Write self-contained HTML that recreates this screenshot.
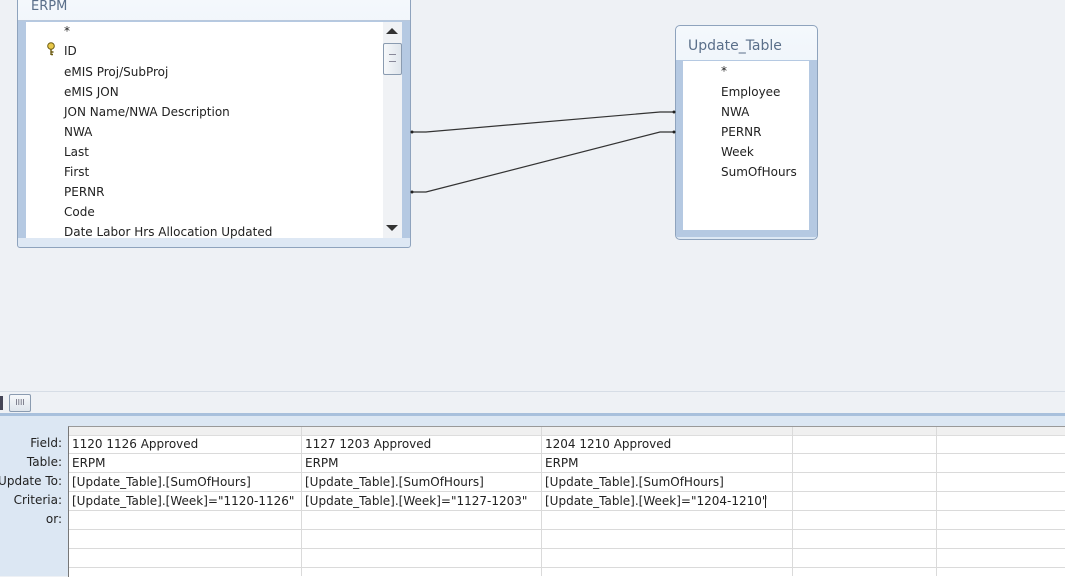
<!DOCTYPE html>
<html><head><style>
body{margin:0;width:1065px;height:576px;overflow:hidden;background:#eef1f5;font-family:"DejaVu Sans","Liberation Sans",sans-serif;font-size:12px;color:#222;position:relative}
.a{position:absolute}
.row{position:absolute;left:64px;white-space:nowrap}
.lab{position:absolute;right:1003px;text-align:right;white-space:nowrap}
.cell{position:absolute;white-space:nowrap}
</style></head><body>
<div class="a" style="left:17px;top:-4px;width:392px;height:250px;border:1px solid #8ea3bd;background:linear-gradient(#f4f8fc,#dde8f4);border-radius:3px"></div>
<div class="a" style="left:31px;top:-1px;color:#5a6f8a;font-size:13px">ERPM</div>
<div class="a" style="left:18px;top:20px;width:392px;height:1px;background:#b8c8dc"></div>
<div class="a" style="left:18px;top:21px;width:392px;height:217px;background:#b5c9e2"></div>
<div class="a" style="left:26px;top:22px;width:376px;height:216px;background:#fff"></div>
<div class="a" style="left:383px;top:22px;width:19px;height:216px;background:#f0f2f5"></div>
<div class="a" style="left:386px;top:28px;width:0;height:0;border-left:6px solid transparent;border-right:6px solid transparent;border-bottom:6px solid #333"></div>
<div class="a" style="left:383px;top:43px;width:17px;height:30px;border:1px solid #8a9bb0;border-radius:2px;background:linear-gradient(90deg,#f6f8fa,#dfe5ec)"></div>
<div class="a" style="left:389px;top:54px;width:7px;height:6px;border-top:1px solid #889;border-bottom:1px solid #889"></div>
<div class="a" style="left:386px;top:225px;width:0;height:0;border-left:6px solid transparent;border-right:6px solid transparent;border-top:6px solid #333"></div>
<svg class="a" style="left:46px;top:42px" width="10" height="14"><circle cx="5" cy="4" r="3.3" fill="#e8c84a" stroke="#6b5a10" stroke-width="1"/><path d="M5 7 V13 M5 10 H7.5 M5 12.5 H7" stroke="#6b5a10" stroke-width="1.4" fill="none"/></svg>
<div class="row" style="top:24px">*</div>
<div class="row" style="top:44px">ID</div>
<div class="row" style="top:65px">eMIS Proj/SubProj</div>
<div class="row" style="top:85px">eMIS JON</div>
<div class="row" style="top:105px">JON Name/NWA Description</div>
<div class="row" style="top:125px">NWA</div>
<div class="row" style="top:145px">Last</div>
<div class="row" style="top:165px">First</div>
<div class="row" style="top:185px">PERNR</div>
<div class="row" style="top:205px">Code</div>
<div class="row" style="top:225px">Date Labor Hrs Allocation Updated</div>
<div class="a" style="left:675px;top:25px;width:141px;height:213px;border:1px solid #8ea3bd;background:linear-gradient(#f4f8fc,#dde8f4);border-radius:5px"></div>
<div class="a" style="left:688px;top:38px;color:#5a6f8a;font-size:14px">Update_Table</div>
<div class="a" style="left:676px;top:60px;width:141px;height:177px;background:#b5c9e2"></div>
<div class="a" style="left:683px;top:61px;width:126px;height:169px;background:#fff"></div>
<div class="row" style="left:721px;top:64px">*</div>
<div class="row" style="left:721px;top:85px">Employee</div>
<div class="row" style="left:721px;top:105px">NWA</div>
<div class="row" style="left:721px;top:125px">PERNR</div>
<div class="row" style="left:721px;top:145px">Week</div>
<div class="row" style="left:721px;top:165px">SumOfHours</div>
<svg class="a" style="left:0;top:0" width="1065" height="576"><g stroke="#333" stroke-width="1.2" fill="none"><polyline points="411,132 426,132 660,112 675,112"/><polyline points="411,192 426,192 660,132 675,132"/></g><g fill="#222"><circle cx="412" cy="132" r="1.5"/><circle cx="412" cy="192" r="1.5"/><circle cx="674" cy="112" r="1.5"/><circle cx="674" cy="132" r="1.5"/></g></svg>
<div class="a" style="left:0;top:391px;width:1065px;height:1px;background:#d6dde6"></div>
<div class="a" style="left:0;top:396px;width:3px;height:14px;background:#445"></div>
<div class="a" style="left:9px;top:394px;width:20px;height:16px;border:1px solid #8a9bb0;border-radius:2px;background:linear-gradient(#f6f8fa,#dfe5ec);font-size:8px;text-align:center;line-height:16px;color:#667">IIII</div>
<div class="a" style="left:0;top:413px;width:1065px;height:3px;background:#a8c0dc"></div>
<div class="a" style="left:0;top:416px;width:1065px;height:160px;background:#dce7f3"></div>
<div class="a" style="left:68px;top:426px;width:997px;height:150px;background:#fff;border-left:1px solid #777;border-top:1px solid #999"></div>
<div class="a" style="left:69px;top:427px;width:996px;height:8px;background:#f0f0f0;border-bottom:1px solid #ddd"></div>
<svg class="a" style="left:0;top:0" width="1065" height="576"><g stroke="#dadada" stroke-width="1"><line x1="69" y1="453.5" x2="1065" y2="453.5"/><line x1="69" y1="472.5" x2="1065" y2="472.5"/><line x1="69" y1="491.5" x2="1065" y2="491.5"/><line x1="69" y1="510.5" x2="1065" y2="510.5"/><line x1="69" y1="529.5" x2="1065" y2="529.5"/><line x1="69" y1="548.5" x2="1065" y2="548.5"/><line x1="69" y1="567.5" x2="1065" y2="567.5"/><line x1="301.5" y1="427" x2="301.5" y2="576"/><line x1="541.5" y1="427" x2="541.5" y2="576"/><line x1="792.5" y1="427" x2="792.5" y2="576"/><line x1="936.5" y1="427" x2="936.5" y2="576"/></g><line x1="765.5" y1="495" x2="765.5" y2="508" stroke="#222"/></svg>
<div class="lab" style="top:436px">Field:</div>
<div class="lab" style="top:455px">Table:</div>
<div class="lab" style="top:474px">Update To:</div>
<div class="lab" style="top:493px">Criteria:</div>
<div class="lab" style="top:512px">or:</div>
<div class="cell" style="left:72px;top:437px">1120 1126 Approved</div>
<div class="cell" style="left:72px;top:456px">ERPM</div>
<div class="cell" style="left:72px;top:475px">[Update_Table].[SumOfHours]</div>
<div class="cell" style="left:72px;top:494px">[Update_Table].[Week]="1120-1126"</div>
<div class="cell" style="left:305px;top:437px">1127 1203 Approved</div>
<div class="cell" style="left:305px;top:456px">ERPM</div>
<div class="cell" style="left:305px;top:475px">[Update_Table].[SumOfHours]</div>
<div class="cell" style="left:305px;top:494px">[Update_Table].[Week]="1127-1203"</div>
<div class="cell" style="left:545px;top:437px">1204 1210 Approved</div>
<div class="cell" style="left:545px;top:456px">ERPM</div>
<div class="cell" style="left:545px;top:475px">[Update_Table].[SumOfHours]</div>
<div class="cell" style="left:545px;top:494px">[Update_Table].[Week]="1204-1210"</div>
</body></html>
